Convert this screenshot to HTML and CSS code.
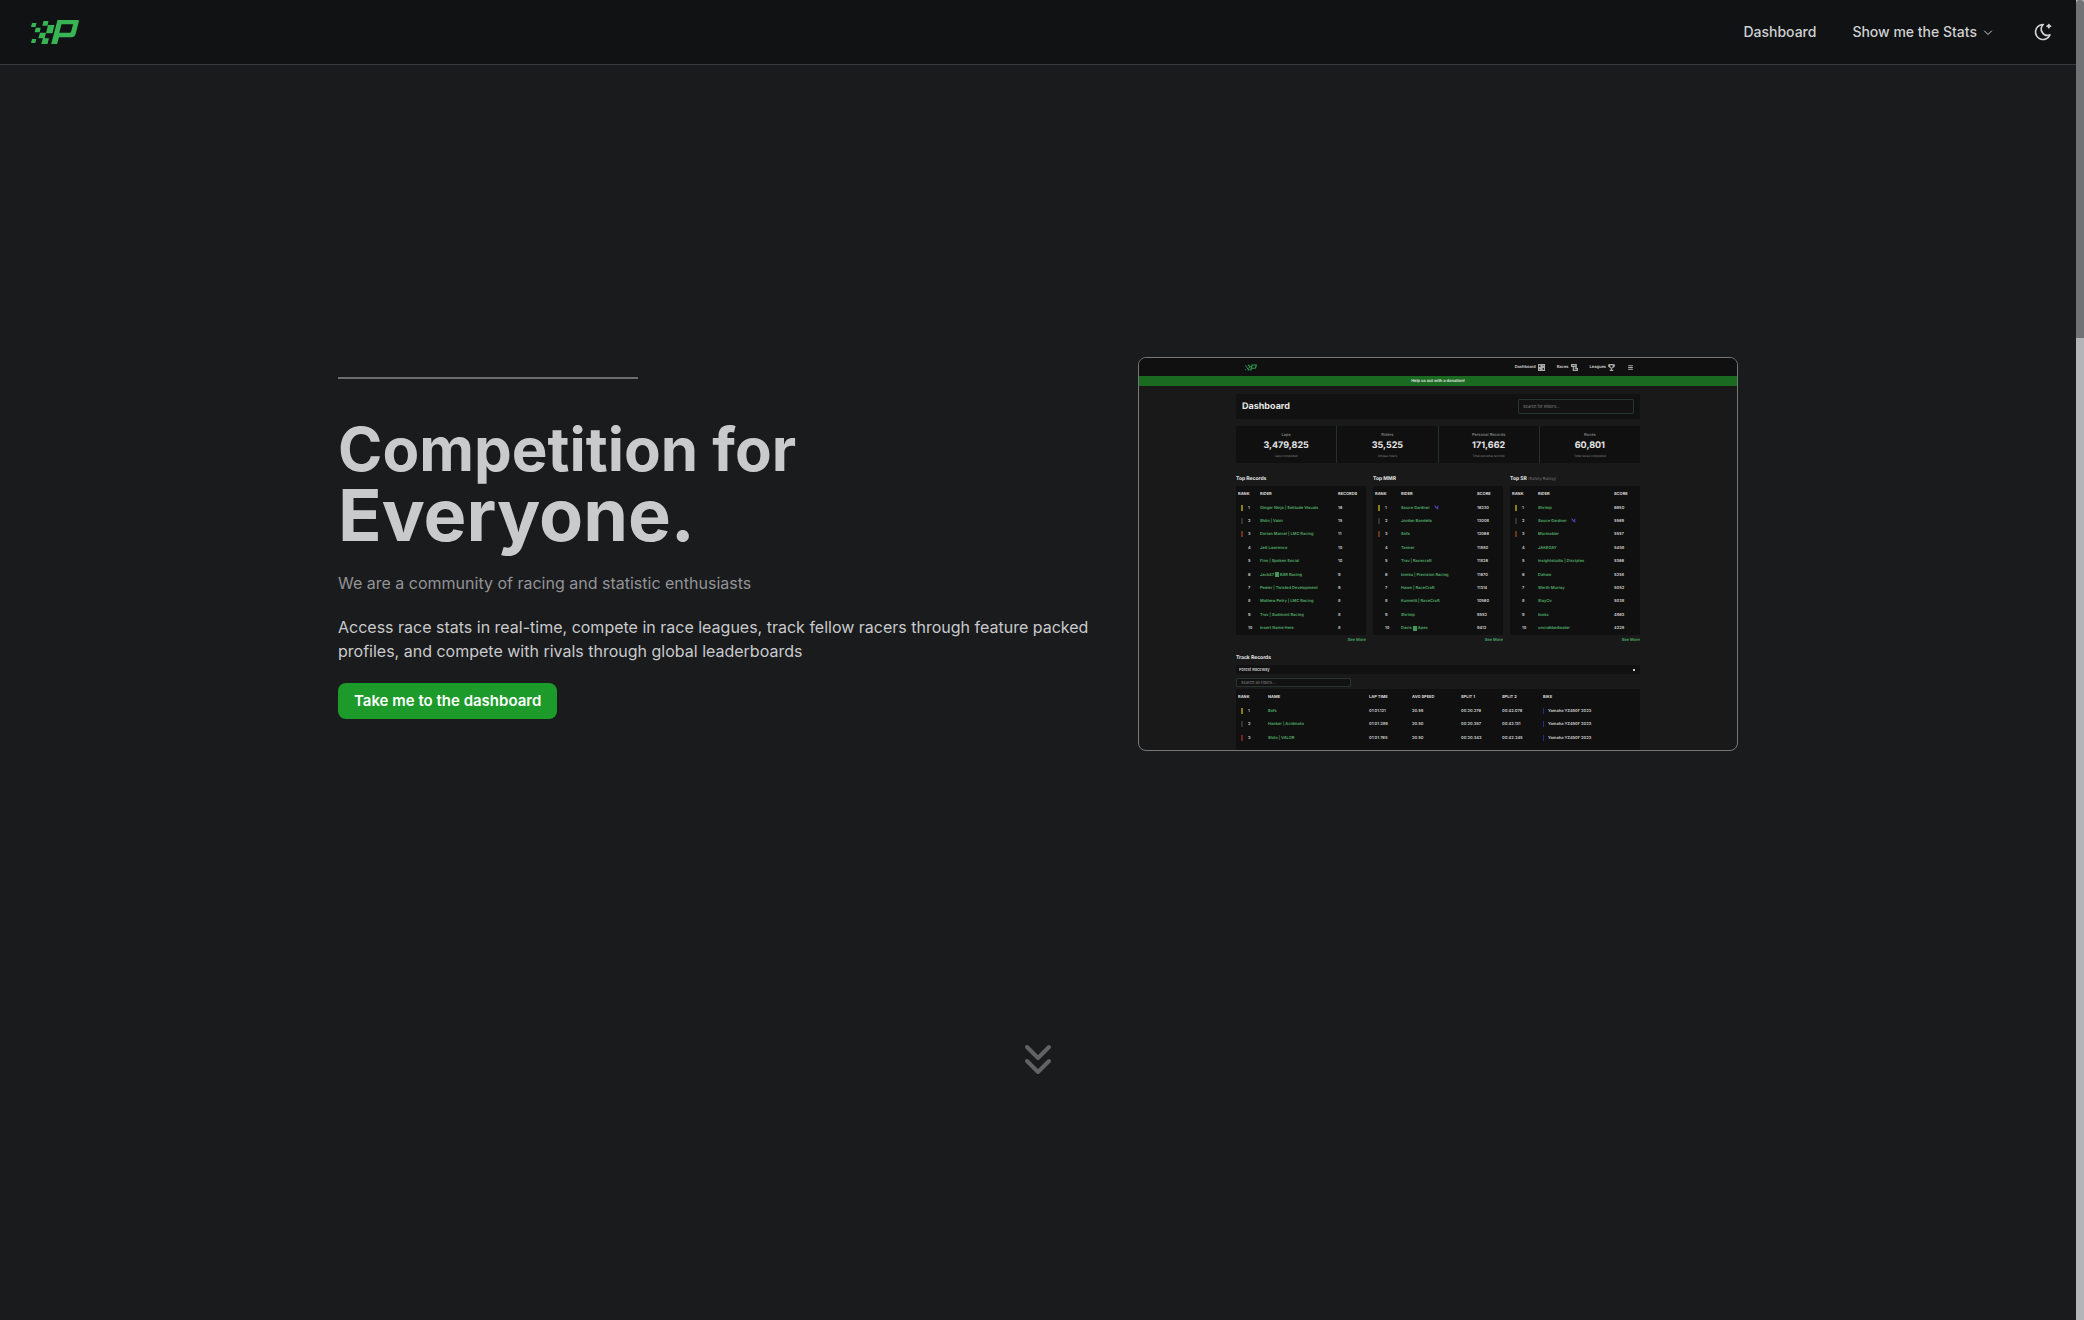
FILE: index.html
```html
<!DOCTYPE html>
<html lang="en">
<head>
<meta charset="utf-8">
<title>Competition for Everyone</title>
<link rel="stylesheet" href="styles.css">
</head>
<body>
<svg class="defs" aria-hidden="true">
  <symbol id="logo" viewBox="0 0 48 24">
    <path d="M1 3h4.500l-1 4h-4.500zM12.500 1h5l-1 4.700h-5.200zM17 5h6.500l-2 8.300h-6.500zM4.700 7.700h5l-1 4.600h-5zM9 12.700h6l-1.400 5.600h-6.300zM1 19h4.300l-1 4h-4.300zM12 18.300h6l-1.500 5.700h-6.300z"/>
    <path fill-rule="evenodd" d="M26.500 0h20q1.800 0 1.300 1.800l-3.200 12.200q-.9 3.300-4.300 3.300h-12.300l-1.900 6.700h-5.900zM30.500 4.300l-2.200 8.500h10.100q1.400 0 1.800-1.500l1.900-7z"/>
  </symbol>
  <symbol id="badge" viewBox="0 0 10 10"><path d="M0 1l4 1 1 3 2-3 3-1-2 3 1 5-5-2z"/></symbol>
</svg>
<div class="app">
<div class="page">
  <header class="topbar">
    <a class="brand" href="#" aria-label="Home"><svg><use href="#logo"/></svg></a>
    <nav class="nav">
      <a href="#">Dashboard</a>
      <button type="button" class="menu">Show me the Stats
        <svg viewBox="0 0 10 10" width="10" height="10"><path d="M1.500 4L5 7.500l3.500-3.500"/></svg>
      </button>
      <button type="button" class="theme" aria-label="Toggle theme">
        <svg viewBox="0 0 24 24" width="20" height="20"><path d="M12 3c.132 0 .263 0 .393 0a7.500 7.500 0 0 0 7.920 12.446a9 9 0 1 1-8.313-12.454z"/><path d="M17 4a2 2 0 0 0 2 2a2 2 0 0 0-2 2a2 2 0 0 0-2-2a2 2 0 0 0 2-2" transform="translate(2 -1)"/></svg>
      </button>
    </nav>
  </header>
  <main>
    <section class="hero">
      <div class="intro">
        <hr>
        <h1>Competition for <strong>Everyone.</strong></h1>
        <p class="lead">We are a community of racing and statistic enthusiasts</p>
        <p>Access race stats in real-time, compete in race leagues, track fellow racers through feature packed profiles, and compete with rivals through global leaderboards</p>
        <a class="cta" href="#">Take me to the dashboard</a>
      </div>
      <div class="preview">
        <div class="p-nav">
          <svg class="p-logo"><use href="#logo"/></svg>
          <div class="p-links">
            <span>Dashboard <svg viewBox="0 0 12 12"><path d="M1 1h4v5H1zM7 1h4v3H7zM1 8h4v3H1zM7 6h4v5H7z"/></svg></span>
            <span>Races <svg viewBox="0 0 12 12"><path d="M1 1h8v7h2v3H4V4H1zM5 4h3M6 7h3"/></svg></span>
            <span>Leagues <svg viewBox="0 0 12 12"><path d="M3 1h6v3q0 3-3 3T3 4zM3 2H1q0 3 2 3M9 2h2q0 3-2 3M6 7v3M3 11h6"/></svg></span>
            <svg viewBox="0 0 12 12"><path d="M2 3h8M2 6h8M2 9h8"/></svg>
          </div>
        </div>
        <div class="p-banner">Help us out with a donation!</div>
        <div class="p-body">
          <div class="p-head"><h2>Dashboard</h2><input type="text" placeholder="Search for Riders..." aria-label="Search for Riders"></div>
          <div class="p-stats">
            <div>Laps<b>3,479,825</b><small>Laps completed</small></div>
            <div>Riders<b>35,525</b><small>Unique riders</small></div>
            <div>Personal Records<b>171,662</b><small>Total personal records</small></div>
            <div>Races<b>60,801</b><small>Total races completed</small></div>
          </div>
          <div class="p-boards">
            <section>
              <h3>Top Records</h3>
              <table class="board">
                <colgroup><col class="c-place"><col><col class="c-records"></colgroup>
                <thead><tr><th>RANK</th><th>RIDER</th><th>RECORDS</th></tr></thead>
                <tbody>
                <tr><td><i class="gold"></i>1</td><td>Ginger Ninja | Solitude Visuals</td><td>16</td></tr>
                <tr><td><i class="silver"></i>2</td><td>Shilo | Valor</td><td>15</td></tr>
                <tr><td><i class="bronze"></i>3</td><td>Dorian Marcel | LMC Racing</td><td>11</td></tr>
                <tr><td><i></i>4</td><td>Jett Lawrence</td><td>10</td></tr>
                <tr><td><i></i>5</td><td>Finn | Spoken Social</td><td>10</td></tr>
                <tr><td><i></i>6</td><td>Jack47 <em></em> BSR Racing</td><td>9</td></tr>
                <tr><td><i></i>7</td><td>Peeler | Twisted Development</td><td>9</td></tr>
                <tr><td><i></i>8</td><td>Mathew Petry | LMC Racing</td><td>8</td></tr>
                <tr><td><i></i>9</td><td>Trav | Sudmont Racing</td><td>8</td></tr>
                <tr><td><i></i>10</td><td>Insert Name Here</td><td>8</td></tr>
                </tbody>
              </table>
              <a href="#">See More</a>
            </section>
            <section>
              <h3>Top MMR</h3>
              <table class="board">
                <colgroup><col class="c-rank"><col><col class="c-score"></colgroup>
                <thead><tr><th>RANK</th><th>RIDER</th><th>SCORE</th></tr></thead>
                <tbody>
                <tr><td><i class="gold"></i>1</td><td>Sauce Gardner <svg class="badge"><use href="#badge"/></svg></td><td>16230</td></tr>
                <tr><td><i class="silver"></i>2</td><td>Jordan Bandelis</td><td>13008</td></tr>
                <tr><td><i class="bronze"></i>3</td><td>Sofa</td><td>12066</td></tr>
                <tr><td><i></i>4</td><td>Tanner</td><td>11880</td></tr>
                <tr><td><i></i>5</td><td>Trav | Racecraft</td><td>11826</td></tr>
                <tr><td><i></i>6</td><td>tomka | Precision Racing</td><td>11670</td></tr>
                <tr><td><i></i>7</td><td>Hawe | RaceCraft</td><td>11314</td></tr>
                <tr><td><i></i>8</td><td>Kummitt | RaceCraft</td><td>10560</td></tr>
                <tr><td><i></i>9</td><td>Shrimp</td><td>9552</td></tr>
                <tr><td><i></i>10</td><td>Davis <em></em> Apex</td><td>9412</td></tr>
                </tbody>
              </table>
              <a href="#">See More</a>
            </section>
            <section>
              <h3>Top SR <span>(Safety Rating)</span></h3>
              <table class="board">
                <colgroup><col class="c-rank"><col><col class="c-score"></colgroup>
                <thead><tr><th>RANK</th><th>RIDER</th><th>SCORE</th></tr></thead>
                <tbody>
                <tr><td><i class="gold"></i>1</td><td>Shrimp</td><td>6650</td></tr>
                <tr><td><i class="silver"></i>2</td><td>Sauce Gardner <svg class="badge"><use href="#badge"/></svg></td><td>5569</td></tr>
                <tr><td><i class="bronze"></i>3</td><td>Murmakler</td><td>5557</td></tr>
                <tr><td><i></i>4</td><td>JAKEGAY</td><td>5458</td></tr>
                <tr><td><i></i>5</td><td>Insightstudio | Disciples</td><td>5366</td></tr>
                <tr><td><i></i>6</td><td>Dahaw</td><td>5258</td></tr>
                <tr><td><i></i>7</td><td>Werth Murray</td><td>5052</td></tr>
                <tr><td><i></i>8</td><td>SlayCo</td><td>5038</td></tr>
                <tr><td><i></i>9</td><td>tooks</td><td>4963</td></tr>
                <tr><td><i></i>10</td><td>uncrabbedwater</td><td>4228</td></tr>
                </tbody>
              </table>
              <a href="#">See More</a>
            </section>
          </div>
          <section class="p-track">
            <h3>Track Records</h3>
            <select aria-label="Track"><option>Forest Raceway</option></select>
            <input type="text" placeholder="Search all riders..." aria-label="Search records">
            <table class="laps">
              <colgroup><col class="c-pos"><col><col class="c-lap"><col class="c-speed"><col class="c-split"><col class="c-split"><col class="c-bike"></colgroup>
              <thead><tr><th>RANK</th><th>NAME</th><th>LAP TIME</th><th>AVG SPEED</th><th>SPLIT 1</th><th>SPLIT 2</th><th>BIKE</th></tr></thead>
              <tbody>
              <tr><td><i class="gold"></i>1</td><td>Bofs</td><td>01:01.121</td><td>20.59</td><td>00:20.276</td><td>00:42.076</td><td><i class="bike"></i>Yamaha YZ450F 2023</td></tr>
              <tr><td><i class="silver"></i>2</td><td>Hanker | Acidmoto</td><td>01:01.289</td><td>20.50</td><td>00:20.357</td><td>00:42.131</td><td><i class="bike"></i>Yamaha YZ450F 2023</td></tr>
              <tr><td><i class="red"></i>3</td><td>Shilo | VALOR</td><td>01:01.765</td><td>20.50</td><td>00:20.343</td><td>00:42.245</td><td><i class="bike"></i>Yamaha YZ450F 2023</td></tr>
              </tbody>
            </table>
          </section>
        </div>
      </div>
    </section>
    <a class="down" href="#" aria-label="Scroll down"><svg viewBox="0 0 28 32" width="28" height="32"><path d="M3 4l11 11L25 4M3 18l11 11 11-11"/></svg></a>
  </main>
</div>
<div class="scroll" aria-hidden="true"><div class="thumb"></div></div>
</div>
</body>
</html>
```

FILE: styles.css
```css
* { box-sizing: border-box; }
body { margin: 0; background: #1a1b1d; color: #c9cacc; font: 16px/24px Inter, sans-serif; }
a { color: inherit; text-decoration: none; }
button { background: none; border: 0; padding: 0; color: inherit; font: inherit; }
.defs { display: none; }
.app { display: flex; min-height: 100vh; }
.page { flex: 1; min-width: 0; }
.scroll { width: 8px; background: #b4b5b8; }
.thumb { height: 338px; background: #717276; border-radius: 4px 4px 0 0; }

.topbar { display: flex; align-items: center; justify-content: space-between; height: 65px; padding: 0 23px 0 31px; background: #101213; border-bottom: 1px solid #3a3b3e; }
.brand svg { display: block; width: 48px; height: 24px; fill: #38b454; }
.nav { display: flex; align-items: center; gap: 36px; font-size: 14px; font-weight: 500; color: #cfd0d2; }
.menu { display: flex; align-items: center; gap: 6px; }
.menu svg, .theme svg, .down svg { fill: none; stroke: currentColor; stroke-linecap: round; stroke-linejoin: round; }
.theme svg { display: block; stroke-width: 2; }
.theme { margin-left: 4px; }

.hero { display: flex; justify-content: space-between; gap: 48px; max-width: 1400px; margin: 0 auto; padding-top: 292px; }
.intro { flex: 1; padding-top: 20px; }
.intro hr { width: 300px; height: 2px; margin: 0 0 35px; border: 0; background: #6c6d6f; }
h1 { margin: 0; font-size: 60px; line-height: 70px; font-weight: 700; }
h1 strong { display: block; font-size: 72px; line-height: 62px; font-weight: 700; }
.intro p { margin: 0 0 20px; }
.intro .lead { margin: 25px 0 20px; color: #929396; }
.cta { display: inline-block; padding: 6px 16px; border-radius: 8px; background: #1c9b2b; color: #fff; font-size: 15px; font-weight: 600; }
.down { display: block; width: 28px; margin: 292px auto 0; color: #616264; }
.down svg { display: block; stroke-width: 4; }

.preview { width: 600px; height: 394px; overflow: hidden; border: 1px solid #777; border-radius: 8px; background: #191919; color: #d4d4d4; font-size: 4px; line-height: 6px; font-weight: 600; text-rendering: geometricPrecision; }
.preview h2, .preview h3 { margin: 0; color: #e4e4e4; font-weight: 700; }
.preview h2 { font-size: 9px; line-height: 12px; }
.preview h3 { height: 8px; font-size: 5px; line-height: 8px; }
.preview h3 span { font-size: 4px; font-weight: 400; color: #777; }
.p-nav { display: flex; justify-content: space-between; align-items: center; height: 18px; padding: 0 103px 0 106px; background: #101010; }
.p-logo { width: 12px; height: 7px; fill: #2b9a48; }
.p-links { display: flex; align-items: center; gap: 12px; }
.p-links span { display: flex; align-items: center; gap: 2px; }
.p-links svg { width: 7px; height: 7px; fill: none; stroke: #aaa; stroke-width: 2; }
.p-banner { height: 10px; line-height: 10px; background: #1a6a22; color: #e4e4e4; font-size: 4px; text-align: center; }
.p-body { width: 404px; margin: 0 auto; padding-top: 8px; }
.p-head { display: flex; align-items: center; justify-content: space-between; height: 25px; padding: 0 6px; background: #111; }
.preview input { display: block; border: 1px solid #263530; border-radius: 1px; background: #121212; color: #777; font: 500 4px/6px Inter, sans-serif; padding: 0 4px; }
.preview ::placeholder { color: #727272; }
.p-head input { width: 116px; height: 15px; }
.p-stats { display: grid; grid-template-columns: repeat(4, 1fr); gap: 1px; margin-top: 7px; background: #263029; }
.p-stats div { height: 37px; padding-top: 6px; background: #101010; text-align: center; color: #888; font-weight: 500; }
.p-stats b { display: block; font-size: 9px; line-height: 16px; color: #e4e4e4; }
.p-stats small { display: block; font-size: 3px; line-height: 4px; color: #777; }
.p-boards { display: grid; grid-template-columns: repeat(3, 1fr); gap: 7px; margin-top: 12px; }
.p-boards a { display: block; margin-top: 2px; text-align: right; color: #4aa464; }
.preview table { width: 100%; table-layout: fixed; border-collapse: collapse; background: #101010; }
.board { height: 149px; margin-top: 3px; }
.preview th { height: 15px; padding: 0 0 0 2px; text-align: left; font-weight: 700; color: #dcdcdc; }
.preview td { height: 13px; padding: 0 0 0 2px; white-space: nowrap; }
.preview td:first-child { padding-left: 5px; }
.preview td:nth-child(2) { color: #52ae68; }
.preview i { display: inline-block; width: 2px; height: 6px; margin-right: 5px; vertical-align: middle; }
.preview em { display: inline-block; width: 4px; height: 5px; vertical-align: middle; background: #459758; }
.preview .gold { background: #8c7c16; }
.preview .silver { background: #333; }
.preview .bronze { background: #6b3316; }
.preview .red { background: #722; }
.preview .bike { width: 1px; margin-right: 4px; background: #2a2a8c; }
.badge { width: 5px; height: 5px; margin-left: 3px; vertical-align: middle; fill: #5040b0; }
.c-place { width: 22px; }
.c-rank { width: 26px; }
.c-records { width: 30px; }
.c-score { width: 28px; }
.p-track { margin-top: 11px; }
.p-track select { display: block; width: 100%; height: 9px; margin: 3px 0 4px; padding: 0 0 0 3px; border: 0; background: #111 linear-gradient(#ccc, #ccc) no-repeat right 5px center / 2px 2px; color: #ccc; font: 600 4px/6px Inter, sans-serif; appearance: none; }
.p-track input { width: 115px; height: 9px; margin-bottom: 2px; }
.laps { height: 56px; box-shadow: 0 12px #101010; }
.c-pos { width: 30px; }
.c-lap { width: 43px; }
.c-speed { width: 49px; }
.c-split { width: 41px; }
.c-bike { width: 99px; }
```
